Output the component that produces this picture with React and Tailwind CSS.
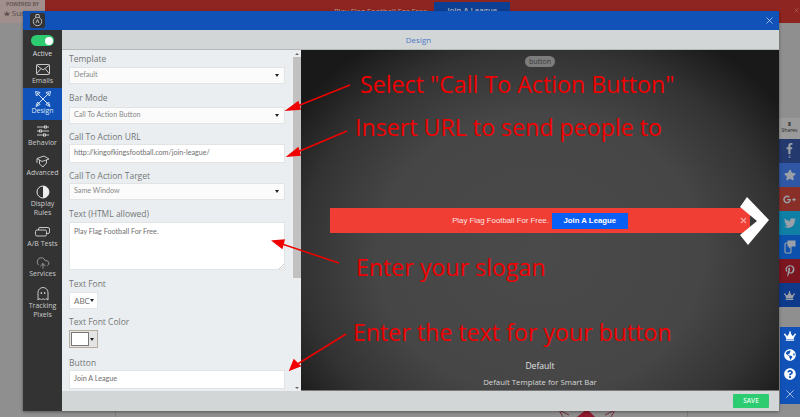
import React from "react";
import { FaFacebookF, FaStar, FaGooglePlusG, FaTwitter, FaPinterestP, FaCrown, FaGlobeAmericas, FaQuestionCircle } from "react-icons/fa";
import { CloudUpload, X } from "lucide-react";

const Label = ({ children, top }) => (
  <div className={`${top} h-[11px] leading-[11px] text-[8.5px] text-[#737878]`}>{children}</div>
);

const Caret = () => (
  <span className="w-0 h-0 mr-[1px] border-l-[2px] border-r-[2px] border-t-[3px] border-l-transparent border-r-transparent border-t-[#222]" />
);

const Select = ({ value, top }) => (
  <div className={`${top} h-[17px] w-[216px] bg-[#fbfbfb] border border-[#e2e4e4] flex items-center justify-between px-[4px] font-['Lato',sans-serif] text-[7.2px] text-[#8a8a8a]`}>
    <span>{value}</span>
    <Caret />
  </div>
);

const Input = ({ value }) => (
  <div className="mt-[2px] h-[19px] w-[216px] bg-white border border-[#e2e4e4] flex items-center px-[4px] font-['Lato',sans-serif] text-[7.2px] text-[#6f6f6f]">{value}</div>
);

const NavItem = ({ icon, lines, active, h, pt }) => (
  <div className={`${h} ${pt} flex flex-col items-center text-[7px] leading-[9px] font-medium ${active ? "bg-[#1052b8] text-[#dfe8f6]" : "text-[#cccccc]"}`}>
    <div className="h-[13px] flex items-center justify-center">{icon}</div>
    <div className="text-center">{lines.map((l) => <div key={l}>{l}</div>)}</div>
  </div>
);

const Social = ({ color, icon, sub }) => (
  <div className={`h-[24px] flex flex-col items-center justify-center ${color} text-[#9aa0a8]`}>
    {icon}
    {sub && <div className="text-[4px] leading-[5px] text-[#b8bcc4]">{sub}</div>}
  </div>
);

const iconStroke = { fill: "none", stroke: "#d8d8d8", strokeWidth: 0.9 };

const EnvelopeIcon = () => (
  <svg width="14" height="11" viewBox="0 0 14 11" {...iconStroke}>
    <rect x="0.5" y="0.5" width="13" height="10" rx="1" />
    <path d="M0.5 1 L7 6 L13.5 1 M0.5 10 L5 4.5 M13.5 10 L9 4.5" />
  </svg>
);

const DesignIcon = () => (
  <svg width="18" height="18" viewBox="0 0 18 18" fill="none" stroke="#cfe0f8" strokeWidth="1">
    <path d="M3 3 L15 15 M15 3 L3 15" />
    <path d="M1.5 1.5 L6 2.5 L2.5 6 Z M16.5 1.5 L12 2.5 L15.5 6 Z" />
    <path d="M2 16.5 L3.5 12 L6 14.5 Z M16 16.5 L14.5 12 L12 14.5 Z" />
  </svg>
);

const SliderIcon = () => (
  <svg width="14" height="12" viewBox="0 0 14 12" {...iconStroke}>
    <path d="M1 2 H13 M1 6 H13 M1 10 H13" />
    <rect x="8.5" y="1" width="2" height="2" fill="#333" />
    <rect x="3.5" y="5" width="2" height="2" fill="#333" />
    <rect x="7.5" y="9" width="2" height="2" fill="#333" />
  </svg>
);

const CapIcon = () => (
  <svg width="14" height="13" viewBox="0 0 14 13" {...iconStroke}>
    <path d="M1 3.5 L8 1 L13 4 L6 6.5 Z" />
    <path d="M3.5 5 V9 L7 12 L10.5 8 V5" />
    <path d="M1 3.5 V8" />
  </svg>
);

const ContrastIcon = () => (
  <svg width="14" height="14" viewBox="0 0 14 14">
    <circle cx="7" cy="7" r="6" fill="#333" stroke="#e6e6e6" />
    <path d="M7 1 A6 6 0 0 1 7 13 Z" fill="#eeeeee" />
  </svg>
);

const ABIcon = () => (
  <svg width="15" height="10" viewBox="0 0 15 10" {...iconStroke}>
    <rect x="3.5" y="0.5" width="11" height="6" rx="1.5" />
    <rect x="0.5" y="3" width="11" height="6" rx="1.5" fill="#333" />
  </svg>
);

const GhostIcon = () => (
  <svg width="12" height="14" viewBox="0 0 12 14" {...iconStroke}>
    <path d="M1 13 V5.5 A5 5 0 0 1 11 5.5 V13 L9 11.5 L7.5 13 L6 11.5 L4.5 13 L3 11.5 Z" />
    <circle cx="4.3" cy="6" r="0.5" fill="#d8d8d8" />
    <circle cx="7.7" cy="6" r="0.5" fill="#d8d8d8" />
  </svg>
);

const PhoneChatIcon = () => (
  <svg width="12" height="14" viewBox="0 0 12 14" fill="none" stroke="#9aa0a8" strokeWidth="1.1">
    <rect x="1" y="3" width="6" height="10" rx="1" />
    <path d="M4 1 H11 V6 H7 L5.5 7.5 V6 H4 Z" fill="#9aa0a8" />
  </svg>
);

const Callout = ({ x, y, children }) => (
  <div className="absolute whitespace-nowrap text-[#f00000] font-['Open_Sans',sans-serif] text-[23.2px] leading-[30px]" style={{ left: x, top: y }}>
    {children}
  </div>
);

export default function App() {
  return (
    <div className="relative w-[800px] h-[417px] overflow-hidden bg-[#8f8f8f] font-['Open_Sans',sans-serif]">
      {/* page behind the dialog */}
      <div className="relative h-[23px] bg-[#8e2520] flex items-start">
        <div className="w-[45px] h-[23px] bg-[#a08f8d] pl-[6px] pt-[1px] overflow-hidden whitespace-nowrap text-[5.2px] leading-[7px] text-[#5a4d4c] font-semibold">
          <div>POWERED BY</div>
          <div className="-ml-[2px] flex items-center gap-[2px] font-normal text-[8px] leading-[10px]"><FaCrown size={9} /> SumoMe</div>
        </div>
        <div className="ml-[289px] pt-[6px] text-[7.7px] leading-[10px] text-[#bfa09e]">Play Flag Football For Free</div>
        <div className="ml-[7px] mt-[2px] w-[76px] h-[16px] bg-[#0d3f92] text-center text-[7.7px] leading-[17px] text-[#a8b8d0] font-semibold">Join A League</div>
        <X className="absolute right-0 top-[7px] text-[#b5716d]" size={7} strokeWidth={2} />
      </div>

      {/* share column */}
      <div className="absolute left-[779px] top-[118px] w-[21px] flex flex-col">
        <div className="h-[21px] bg-[#9a9a9a] text-center text-[5px] leading-[6px] text-[#222] pt-[3px]">
          <div className="font-bold">8</div>
          <div>Shares</div>
        </div>
        <Social color="bg-[#24396e]" icon={<FaFacebookF size={11} />} sub="4" />
        <Social color="bg-[#2f57a5]" icon={<FaStar size={12} />} />
        <Social color="bg-[#8a2f28]" icon={<FaGooglePlusG size={13} />} />
        <Social color="bg-[#0f7fa6]" icon={<FaTwitter size={12} />} />
        <Social color="bg-[#0c52ad]" icon={<PhoneChatIcon />} />
        <Social color="bg-[#7b1620]" icon={<FaPinterestP size={12} />} />
        <Social color="bg-[#0d3a8a]" icon={<FaCrown size={11} />} />
      </div>

      {/* help widget */}
      <div className="absolute left-[780px] top-[327px] w-[20px] h-[77px] bg-[#1052b8] flex flex-col items-center text-white pt-[3px] gap-[7px]">
        <FaCrown size={12} />
        <FaGlobeAmericas size={12} />
        <FaQuestionCircle size={12} />
        <X size={14} strokeWidth={1} />
      </div>

      {/* marks below the dialog */}
      <div className="absolute left-[115px] top-[411px] w-px h-[6px] bg-[#7d7d7d]" />
      <div className="absolute left-[687px] top-[411px] w-px h-[6px] bg-[#7d7d7d]" />
      <svg className="absolute left-[555px] top-[409px]" width="70" height="8" viewBox="0 0 70 8">
        <path d="M4 1 L14 6 M60 1 L50 6 M4 1 L8 8 M60 1 L56 8" stroke="#7b2a3a" fill="none" />
        <path d="M22 8 L32 0 L40 8 Z" fill="#8e1a2c" />
      </svg>

      {/* dialog */}
      <div className="absolute left-[23px] top-[11px] w-[756px] h-[400px] flex flex-col bg-[#d3d6d6] shadow-[0_1px_3px_rgba(0,0,0,0.4)]">
        <div className="h-[19px] bg-[#1052b8] flex items-center justify-end pr-[4px] text-white shrink-0">
          <X size={11} strokeWidth={1.2} />
        </div>
        <div className="flex flex-1 min-h-0">
          {/* nav */}
          <div className="w-[39px] bg-[#333333] shrink-0 flex flex-col">
            <div className="h-[29px] pt-[5px] flex flex-col items-center">
              <div className="w-[23px] h-[11px] rounded-full bg-[#2ecc71] relative">
                <div className="absolute right-[1px] top-[1.5px] w-[8px] h-[8px] rounded-full bg-white" />
              </div>
              <div className="mt-[3px] text-[7px] leading-[9px] font-medium text-[#dddddd]">Active</div>
            </div>
            <NavItem h="h-[29px]" pt="pt-[3.5px]" lines={["Emails"]} icon={<EnvelopeIcon />} />
            <NavItem h="h-[32px]" pt="pt-[4.5px]" active lines={["Design"]} icon={<DesignIcon />} />
            <NavItem h="h-[31px]" pt="pt-[4.5px]" lines={["Behavior"]} icon={<SliderIcon />} />
            <NavItem h="h-[31px]" pt="pt-[3.5px]" lines={["Advanced"]} icon={<CapIcon />} />
            <NavItem h="h-[40px]" pt="pt-[3.5px]" lines={["Display", "Rules"]} icon={<ContrastIcon />} />
            <NavItem h="h-[31px]" pt="pt-[3.5px]" lines={["A/B Tests"]} icon={<ABIcon />} />
            <NavItem h="h-[31px]" pt="pt-[3px]" lines={["Services"]} icon={<CloudUpload size={14} strokeWidth={1} color="#d8d8d8" />} />
            <NavItem h="h-[40px]" pt="pt-[3.5px]" lines={["Tracking", "Pixels"]} icon={<GhostIcon />} />
          </div>

          <div className="flex-1 min-w-0 flex flex-col">
            <div className="h-[20px] shrink-0 text-center pr-[4px] text-[8px] leading-[20px] text-[#4a78c8] border-b border-[#b4b8b8]">Design</div>
            <div className="flex flex-1 min-h-0">
              {/* form */}
              <div className="w-[239px] shrink-0 bg-[#ebeef0] flex">
                <div className="w-[231px] pl-[7px] overflow-hidden">
                  <Label top="mt-[3px]">Template</Label>
                  <Select top="mt-[3px]" value="Default" />
                  <Label top="mt-[8px]">Bar Mode</Label>
                  <Select top="mt-[4px]" value="Call To Action Button" />
                  <Label top="mt-[7px]">Call To Action URL</Label>
                  <Input value="http://kingofkingsfootball.com/join-league/" />
                  <Label top="mt-[7px]">Call To Action Target</Label>
                  <Select top="mt-[2px]" value="Same Window" />
                  <Label top="mt-[8px]">Text (HTML allowed)</Label>
                  <div className="mt-[3px] h-[48px] w-[216px] bg-white border border-[#e2e4e4] px-[4px] pt-[4px] font-['Lato',sans-serif] text-[7.2px] leading-[10px] text-[#6f6f6f] relative">
                    Play Flag Football For Free.
                    <svg className="absolute right-0 bottom-0" width="5" height="5" viewBox="0 0 5 5"><path d="M0 5 L5 0 M2.5 5 L5 2.5" stroke="#aaa" strokeWidth="0.6" /></svg>
                  </div>
                  <Label top="mt-[8px]">Text Font</Label>
                  <div className="mt-[3px] h-[17px] w-[29px] bg-white border border-[#e2e4e4] flex items-center justify-between pl-[4px] pr-[2px] font-['Lato',sans-serif] text-[8px] text-[#6f6f6f]">
                    <span>ABC</span>
                    <Caret />
                  </div>
                  <Label top="mt-[7px]">Text Font Color</Label>
                  <div className="mt-[3px] h-[18px] w-[29px] bg-[#e4e4e4] border border-[#b5aca0] flex items-center justify-between pl-[1px] pr-[2px]">
                    <div className="w-[18px] h-[14px] bg-white border border-[#777]" />
                    <Caret />
                  </div>
                  <Label top="mt-[9px]">Button</Label>
                  <Input value="Join A League" />
                </div>
                <div className="w-[8px] flex flex-col items-center">
                  <div className="h-[7px] flex items-center"><span className="w-0 h-0 border-l-[2px] border-r-[2px] border-b-[2px] border-l-transparent border-r-transparent border-b-[#666]" /></div>
                  <div className="w-full h-[221px] bg-[#c1c1c1]" />
                  <div className="flex-1" />
                  <div className="h-[7px] flex items-center"><span className="w-0 h-0 border-l-[2px] border-r-[2px] border-t-[2px] border-l-transparent border-r-transparent border-t-[#666]" /></div>
                </div>
              </div>

              {/* preview */}
              <div className="flex-1 min-w-0 flex flex-col items-center bg-[radial-gradient(ellipse_62%_75%_at_50%_60%,#4a4a4a_0%,#464646_55%,#333333_80%,#191919_100%)] border-b border-[#77797a]">
                <div className="mt-[6px] w-[30px] h-[11px] rounded-full bg-[#7d7d7d] text-center text-[7px] leading-[11px] text-[#3a3a3a]">button</div>
                <div className="relative mt-[141px] w-full h-[25px]">
                  <div className="ml-[29px] w-[420px] h-[25px] bg-[#f03e35] flex items-center justify-center">
                    <span className="font-['Liberation_Sans',sans-serif] text-[7.8px] text-[#fbe4e2]">Play Flag Football For Free.</span>
                    <span className="ml-[3px] w-[76px] h-[16px] bg-[#0a5ff5] font-['Liberation_Sans',sans-serif] font-bold text-center text-[7.8px] leading-[16px] text-white">Join A League</span>
                  </div>
                  <X className="absolute left-[438px] top-[8px] text-[#f6a9a4]" size={9} strokeWidth={3} />
                  <svg className="absolute left-[438px] top-[-12px]" width="32" height="50" viewBox="0 0 32 50">
                    <path d="M8 1 L1 11 L18 25 L1 39 L9 49 L30 24 Z" fill="#ffffff" />
                  </svg>
                </div>
                <div className="mt-[127px] text-[8.6px] leading-[13px] text-[#e0e0e0]">Default</div>
                <div className="mt-[3px] text-[7.8px] leading-[13px] text-[#d8d8d8]">Default Template for Smart Bar</div>
              </div>
            </div>
            {/* footer */}
            <div className="h-[20px] shrink-0 flex items-center justify-end pr-[10px]">
              <div className="w-[36px] h-[14px] bg-[#2ecc71] rounded-[1px] text-center text-[6.5px] leading-[14px] text-[#e8fff0] font-semibold">SAVE</div>
            </div>
          </div>
        </div>
      </div>

      {/* logo */}
      <div className="absolute left-[30px] top-[13px] w-[15px] h-[15px] rounded-[2px] bg-[#333333] flex items-center justify-center">
        <svg width="11" height="13" viewBox="0 0 11 13" fill="none" stroke="#d8d8d8" strokeWidth="0.8">
          <circle cx="5.5" cy="7.5" r="4.2" />
          <path d="M3.5 3.5 L4 0.5 H7 L7.5 3.5 M5.5 5.5 L4 9 M5.5 5.5 L7 9" />
        </svg>
      </div>

      {/* annotations over the screenshot */}
      <svg className="absolute inset-0 pointer-events-none" width="800" height="417" viewBox="0 0 800 417">
        <g stroke="#f00000" strokeWidth="1.5" fill="#f00000">
          <line x1="350" y1="85" x2="295" y2="107" />
          <path d="M287 110 L298 102 L300 109 Z" />
          <line x1="347" y1="131" x2="295" y2="153" />
          <path d="M288 156 L298 148 L300 155 Z" />
          <line x1="339" y1="263" x2="282" y2="244" />
          <path d="M273 241 L284 240 L282 248 Z" />
          <line x1="346" y1="334" x2="296" y2="365" />
          <path d="M290 370 L294 360 L300 366 Z" />
        </g>
      </svg>
      <Callout x={360} y={69}>Select "Call To Action Button"</Callout>
      <Callout x={355} y={112}>Insert URL to send people to</Callout>
      <Callout x={356} y={252}>Enter your slogan</Callout>
      <Callout x={353} y={317}>Enter the text for your button</Callout>
    </div>
  );
}
